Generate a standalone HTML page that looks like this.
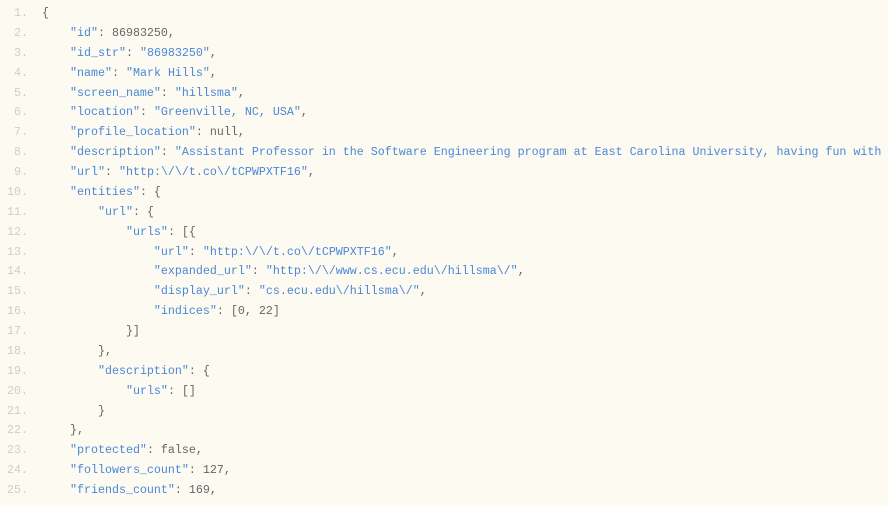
<!DOCTYPE html>
<html><head><meta charset="utf-8"><style>
html,body{margin:0;padding:0;background:#fdfaf2;width:888px;height:506px;overflow:hidden}
pre{margin:0;padding-top:4px;font-family:"Liberation Mono",monospace;font-size:11.67px;line-height:19.875px;color:#666}
.l{display:block;white-space:pre}
.n{display:inline-block;width:28px;text-align:right;color:#d0cec8;margin-right:14px}
.k{color:#4a88d6}
</style></head><body><pre>
<span class="l"><span class="n">1.</span>{</span><span class="l"><span class="n">2.</span>    <span class="k">"id"</span>: 86983250,</span><span class="l"><span class="n">3.</span>    <span class="k">"id_str"</span>: <span class="k">"86983250"</span>,</span><span class="l"><span class="n">4.</span>    <span class="k">"name"</span>: <span class="k">"Mark Hills"</span>,</span><span class="l"><span class="n">5.</span>    <span class="k">"screen_name"</span>: <span class="k">"hillsma"</span>,</span><span class="l"><span class="n">6.</span>    <span class="k">"location"</span>: <span class="k">"Greenville, NC, USA"</span>,</span><span class="l"><span class="n">7.</span>    <span class="k">"profile_location"</span>: null,</span><span class="l"><span class="n">8.</span>    <span class="k">"description"</span>: <span class="k">"Assistant Professor in the Software Engineering program at East Carolina University, having fun with</span></span><span class="l"><span class="n">9.</span>    <span class="k">"url"</span>: <span class="k">"http:\/\/t.co\/tCPWPXTF16"</span>,</span><span class="l"><span class="n">10.</span>    <span class="k">"entities"</span>: {</span><span class="l"><span class="n">11.</span>        <span class="k">"url"</span>: {</span><span class="l"><span class="n">12.</span>            <span class="k">"urls"</span>: [{</span><span class="l"><span class="n">13.</span>                <span class="k">"url"</span>: <span class="k">"http:\/\/t.co\/tCPWPXTF16"</span>,</span><span class="l"><span class="n">14.</span>                <span class="k">"expanded_url"</span>: <span class="k">"http:\/\/www.cs.ecu.edu\/hillsma\/"</span>,</span><span class="l"><span class="n">15.</span>                <span class="k">"display_url"</span>: <span class="k">"cs.ecu.edu\/hillsma\/"</span>,</span><span class="l"><span class="n">16.</span>                <span class="k">"indices"</span>: [0, 22]</span><span class="l"><span class="n">17.</span>            }]</span><span class="l"><span class="n">18.</span>        },</span><span class="l"><span class="n">19.</span>        <span class="k">"description"</span>: {</span><span class="l"><span class="n">20.</span>            <span class="k">"urls"</span>: []</span><span class="l"><span class="n">21.</span>        }</span><span class="l"><span class="n">22.</span>    },</span><span class="l"><span class="n">23.</span>    <span class="k">"protected"</span>: false,</span><span class="l"><span class="n">24.</span>    <span class="k">"followers_count"</span>: 127,</span><span class="l"><span class="n">25.</span>    <span class="k">"friends_count"</span>: 169,</span></pre></body></html>
